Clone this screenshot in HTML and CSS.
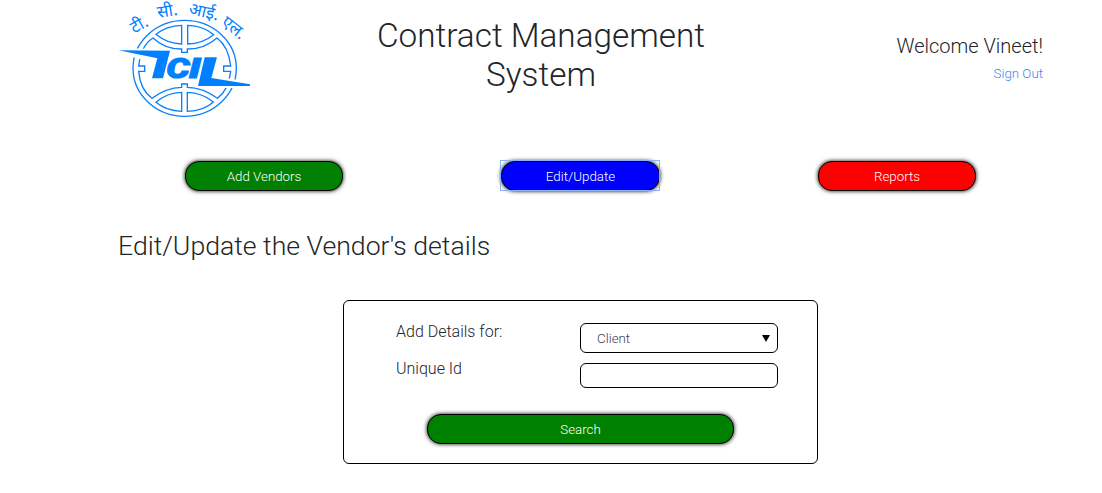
FILE: index.html
```html
<!DOCTYPE html>
<html lang="en">
<head>
<meta charset="utf-8">
<title>Contract Management System</title>
<link rel="stylesheet" href="styles.css">
</head>
<body>
<div class="container">
  <header class="header">
    <svg class="logo" viewBox="24 -120 402 354" role="img" aria-label="TCIL">
      <g class="line">
        <ellipse cx="224" cy="85" rx="155" ry="144"/>
        <path d="M104 78H86C91 38 105 8 129 -6Q165 28 215 27V37H232V27Q282 28 321 -6C345 12 358 41 362 78H341V94H362C358 130 343 160 322 175Q280 143 232 142V132H215V142Q168 143 126 175C103 158 89 130 86 94H104Z"/>
        <path d="M215 -44C185 -43 157 -33 138 -17Q171 11 215 12ZM233 -44C263 -43 292 -33 311 -16Q277 11 233 12Z"/>
        <path d="M215 157Q170 158 138 187C158 204 186 213 215 214ZM232 157Q277 158 310 186C291 204 263 213 232 214Z"/>
      </g>
      <path class="halo" d="M28 32L178 34L163 113H126L142 65ZM276 52H319L302 114L420 133V137H264Z"/>
      <path class="solid" d="M26 31L180 32L159 115H126L142 55ZM284 52H321L304 114L420 133V138H264Z"/>
      <text class="mark" x="169" y="114" textLength="70" lengthAdjust="spacingAndGlyphs">C</text>
      <text class="mark" x="236" y="114" textLength="36" lengthAdjust="spacingAndGlyphs">I</text>
      <g class="hindi">
        <text transform="translate(72 -19) rotate(-28)">टी.</text>
        <text transform="translate(144 -66) rotate(-9)">सी.</text>
        <text transform="translate(234 -79) rotate(13)">आई.</text>
        <text transform="translate(331 -47) rotate(38)">एल.</text>
      </g>
    </svg>
    <h1 class="title">Contract Management<br>System</h1>
    <div class="account">
      <div class="welcome">Welcome Vineet!</div>
      <a class="signout">Sign Out</a>
    </div>
  </header>
  <nav class="tabs">
    <button class="btn green">Add Vendors</button>
    <button class="btn blue focus">Edit/Update</button>
    <button class="btn red">Reports</button>
  </nav>
  <h2 class="heading">Edit/Update the Vendor's details</h2>
  <form class="panel">
    <div class="row">
      <label class="label">Add Details for:</label>
      <div class="field select"><span>Client</span><svg class="arrow" viewBox="0 0 8 7"><path d="M0 0H8L4 7Z"/></svg></div>
    </div>
    <div class="row second">
      <label class="label">Unique Id</label>
      <input class="field input" type="text">
    </div>
    <button class="btn green search" type="button">Search</button>
  </form>
</div>
</body>
</html>
```
FILE: styles.css
```css
* { box-sizing: border-box; }
body {
  margin: 0;
  background: #fff;
  color: #212529;
  font-family: Roboto, "Liberation Sans", sans-serif;
  font-weight: 300;
}
.container { width: 925px; margin-left: 118px; }
.header { display: flex; height: 161px; }
.logo { width: 134px; height: 118px; flex: none; overflow: visible; }
.line { fill: none; stroke: #0a80ff; stroke-width: 4; }
.halo { fill: #fff; stroke: #fff; stroke-width: 14; }
.solid { fill: #0080ff; }
.mark { fill: #0080ff; stroke: #0080ff; stroke-width: 3; font: italic 900 84px Roboto, sans-serif; }
.hindi { fill: #0080ff; font: 400 51px "Noto Sans Devanagari", "Noto Sans", sans-serif; }
.title {
  width: 340px;
  margin: 16px 0 0 119px;
  text-align: center;
  white-space: nowrap;
  font-size: 33.3px;
  line-height: 39px;
  font-weight: 300;
}
.account { margin: 34px 0 0 auto; text-align: right; }
.welcome { font-size: 20px; line-height: 24px; }
.signout { display: block; margin-top: 6px; font-size: 13.33px; line-height: 20px; color: #4285f4; }
.tabs { display: flex; justify-content: space-between; padding: 0 67px 0 67px; height: 30px; }
.btn {
  display: block;
  width: 158px;
  height: 30px;
  padding: 1px 0 0;
  border: 1px solid #000;
  border-radius: 14px;
  box-shadow: 0 0 4px #000;
  color: #fff;
  font: 300 13.33px/28px Roboto, sans-serif;
}
.green { background: green; }
.blue { background: blue; }
.red { background: red; }
.focus { width: 159px; border-radius: 14px; }
.tabs .focus { outline: none; position: relative; }
.focus::after { content: ""; position: absolute; inset: -2px -1px -1px -2px; border: 1px solid #8ab4f8; }
.heading { margin: 38px 0 0; font-size: 26.65px; line-height: 34px; font-weight: 300; }
.panel {
  width: 475px;
  height: 164px;
  margin: 37px 0 0 225px;
  padding: 22px 39px 0 52px;
  border: 1px solid #000;
  border-radius: 6px;
}
.row { display: flex; justify-content: space-between; }
.second { margin-top: 10px; }
.label { font-size: 16px; line-height: 18px; }
.second .label { margin-top: -3px; }
.field { width: 198px; border: 1px solid #000; border-radius: 6px; background: #fff; }
.select { display: flex; align-items: center; justify-content: space-between; height: 30px; padding: 0 7px 0 16px; font-size: 13.33px; color: #444; }
.arrow { width: 8px; height: 7px; fill: #000; }
.input { display: block; height: 25px; }
.search { width: 307px; margin: 26px 0 0 31px; }
```
